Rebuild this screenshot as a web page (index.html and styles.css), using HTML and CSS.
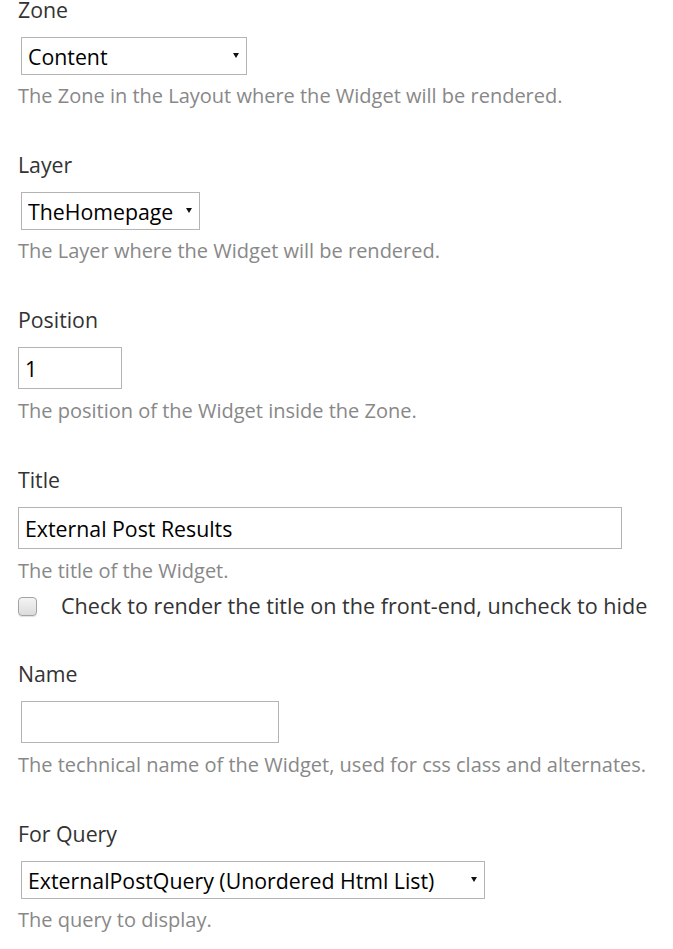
FILE: index.html
```html
<!DOCTYPE html>
<html>
<head>
<meta charset="utf-8">
<link rel="stylesheet" href="styles.css">
</head>
<body>
<form class="editor">
  <div class="field">
    <label class="label">Zone</label>
    <span class="select-wrap w-zone"><select class="select"><option>Content</option></select></span>
    <span class="hint">The Zone in the Layout where the Widget will be rendered.</span>
  </div>
  <div class="field">
    <label class="label">Layer</label>
    <span class="select-wrap w-layer"><select class="select"><option>TheHomepage</option></select></span>
    <span class="hint">The Layer where the Widget will be rendered.</span>
  </div>
  <div class="field">
    <label class="label">Position</label>
    <input class="text w-pos" type="text" value="1">
    <span class="hint">The position of the Widget inside the Zone.</span>
  </div>
  <div class="field field-check">
    <label class="label">Title</label>
    <input class="text w-title" type="text" value="External Post Results">
    <span class="hint">The title of the Widget.</span>
    <label class="check"><span class="box"></span><span>Check to render the title on the front-end, uncheck to hide</span></label>
  </div>
  <div class="field">
    <label class="label">Name</label>
    <input class="text w-name" type="text" value="">
    <span class="hint">The technical name of the Widget, used for css class and alternates.</span>
  </div>
  <div class="field">
    <label class="label">For Query</label>
    <span class="select-wrap w-query"><select class="select"><option>ExternalPostQuery (Unordered Html List)</option></select></span>
    <span class="hint">The query to display.</span>
  </div>
</form>
</body>
</html>
```
FILE: styles.css
```css
html, body {
  margin: 0;
  padding: 0;
  background: #fff;
}
body {
  font-family: "Open Sans", "Noto Sans", sans-serif;
  font-size: 21.3px;
  line-height: 24px;
  color: #333;
}
.editor {
  display: flex;
  flex-direction: column;
  padding: 0 0 0 18px;
}
.field {
  display: flex;
  flex-direction: column;
  align-items: flex-start;
  margin-bottom: 47px;
}
.field-check {
  margin-bottom: 46px;
}
.label {
  display: block;
  font-size: 21.3px;
  line-height: 20px;
  color: #333;
  margin-bottom: 17px;
}
.hint {
  display: block;
  font-size: 20px;
  line-height: 24px;
  color: #888;
}
.select-wrap {
  position: relative;
  display: block;
  margin-left: 3px;
  margin-bottom: 9px;
}
.select-wrap::after {
  content: "";
  position: absolute;
  right: 8px;
  top: 16px;
  border-left: 3px solid transparent;
  border-right: 3px solid transparent;
  border-top: 5px solid #111;
  pointer-events: none;
}
.select {
  -webkit-appearance: none;
  appearance: none;
  display: block;
  width: 100%;
  height: 38px;
  box-sizing: border-box;
  border: 1px solid #b4b4b4;
  border-radius: 0;
  background: #fff;
  font-family: inherit;
  font-size: 21.3px;
  color: #000;
  padding: 0 20px 0 6px;
  margin: 0;
}
.w-zone { width: 226px; }
.w-layer { width: 179px; }
.w-query { width: 464px; }
.text {
  display: block;
  box-sizing: border-box;
  height: 42px;
  border: 1px solid #b4b4b4;
  border-radius: 0;
  background: #fff;
  font-family: inherit;
  font-size: 21.3px;
  color: #000;
  padding: 1px 6px 0 6px;
  margin: 0 0 10px 0;
  outline: none;
}
.w-pos { width: 104px; }
.w-title { width: 604px; }
.w-name { width: 258px; margin-left: 3px; }
.check {
  display: flex;
  align-items: center;
  margin-top: 11px;
  font-size: 21.6px;
  line-height: 24px;
  color: #333;
}
.box {
  width: 17px;
  height: 17px;
  border: 1px solid #a3a3a3;
  border-radius: 4px;
  background: linear-gradient(#f4f4f4, #dcdcdc);
  box-shadow: 0 1px 1px rgba(0,0,0,0.12);
  margin-right: 24px;
  flex: none;
}
```
